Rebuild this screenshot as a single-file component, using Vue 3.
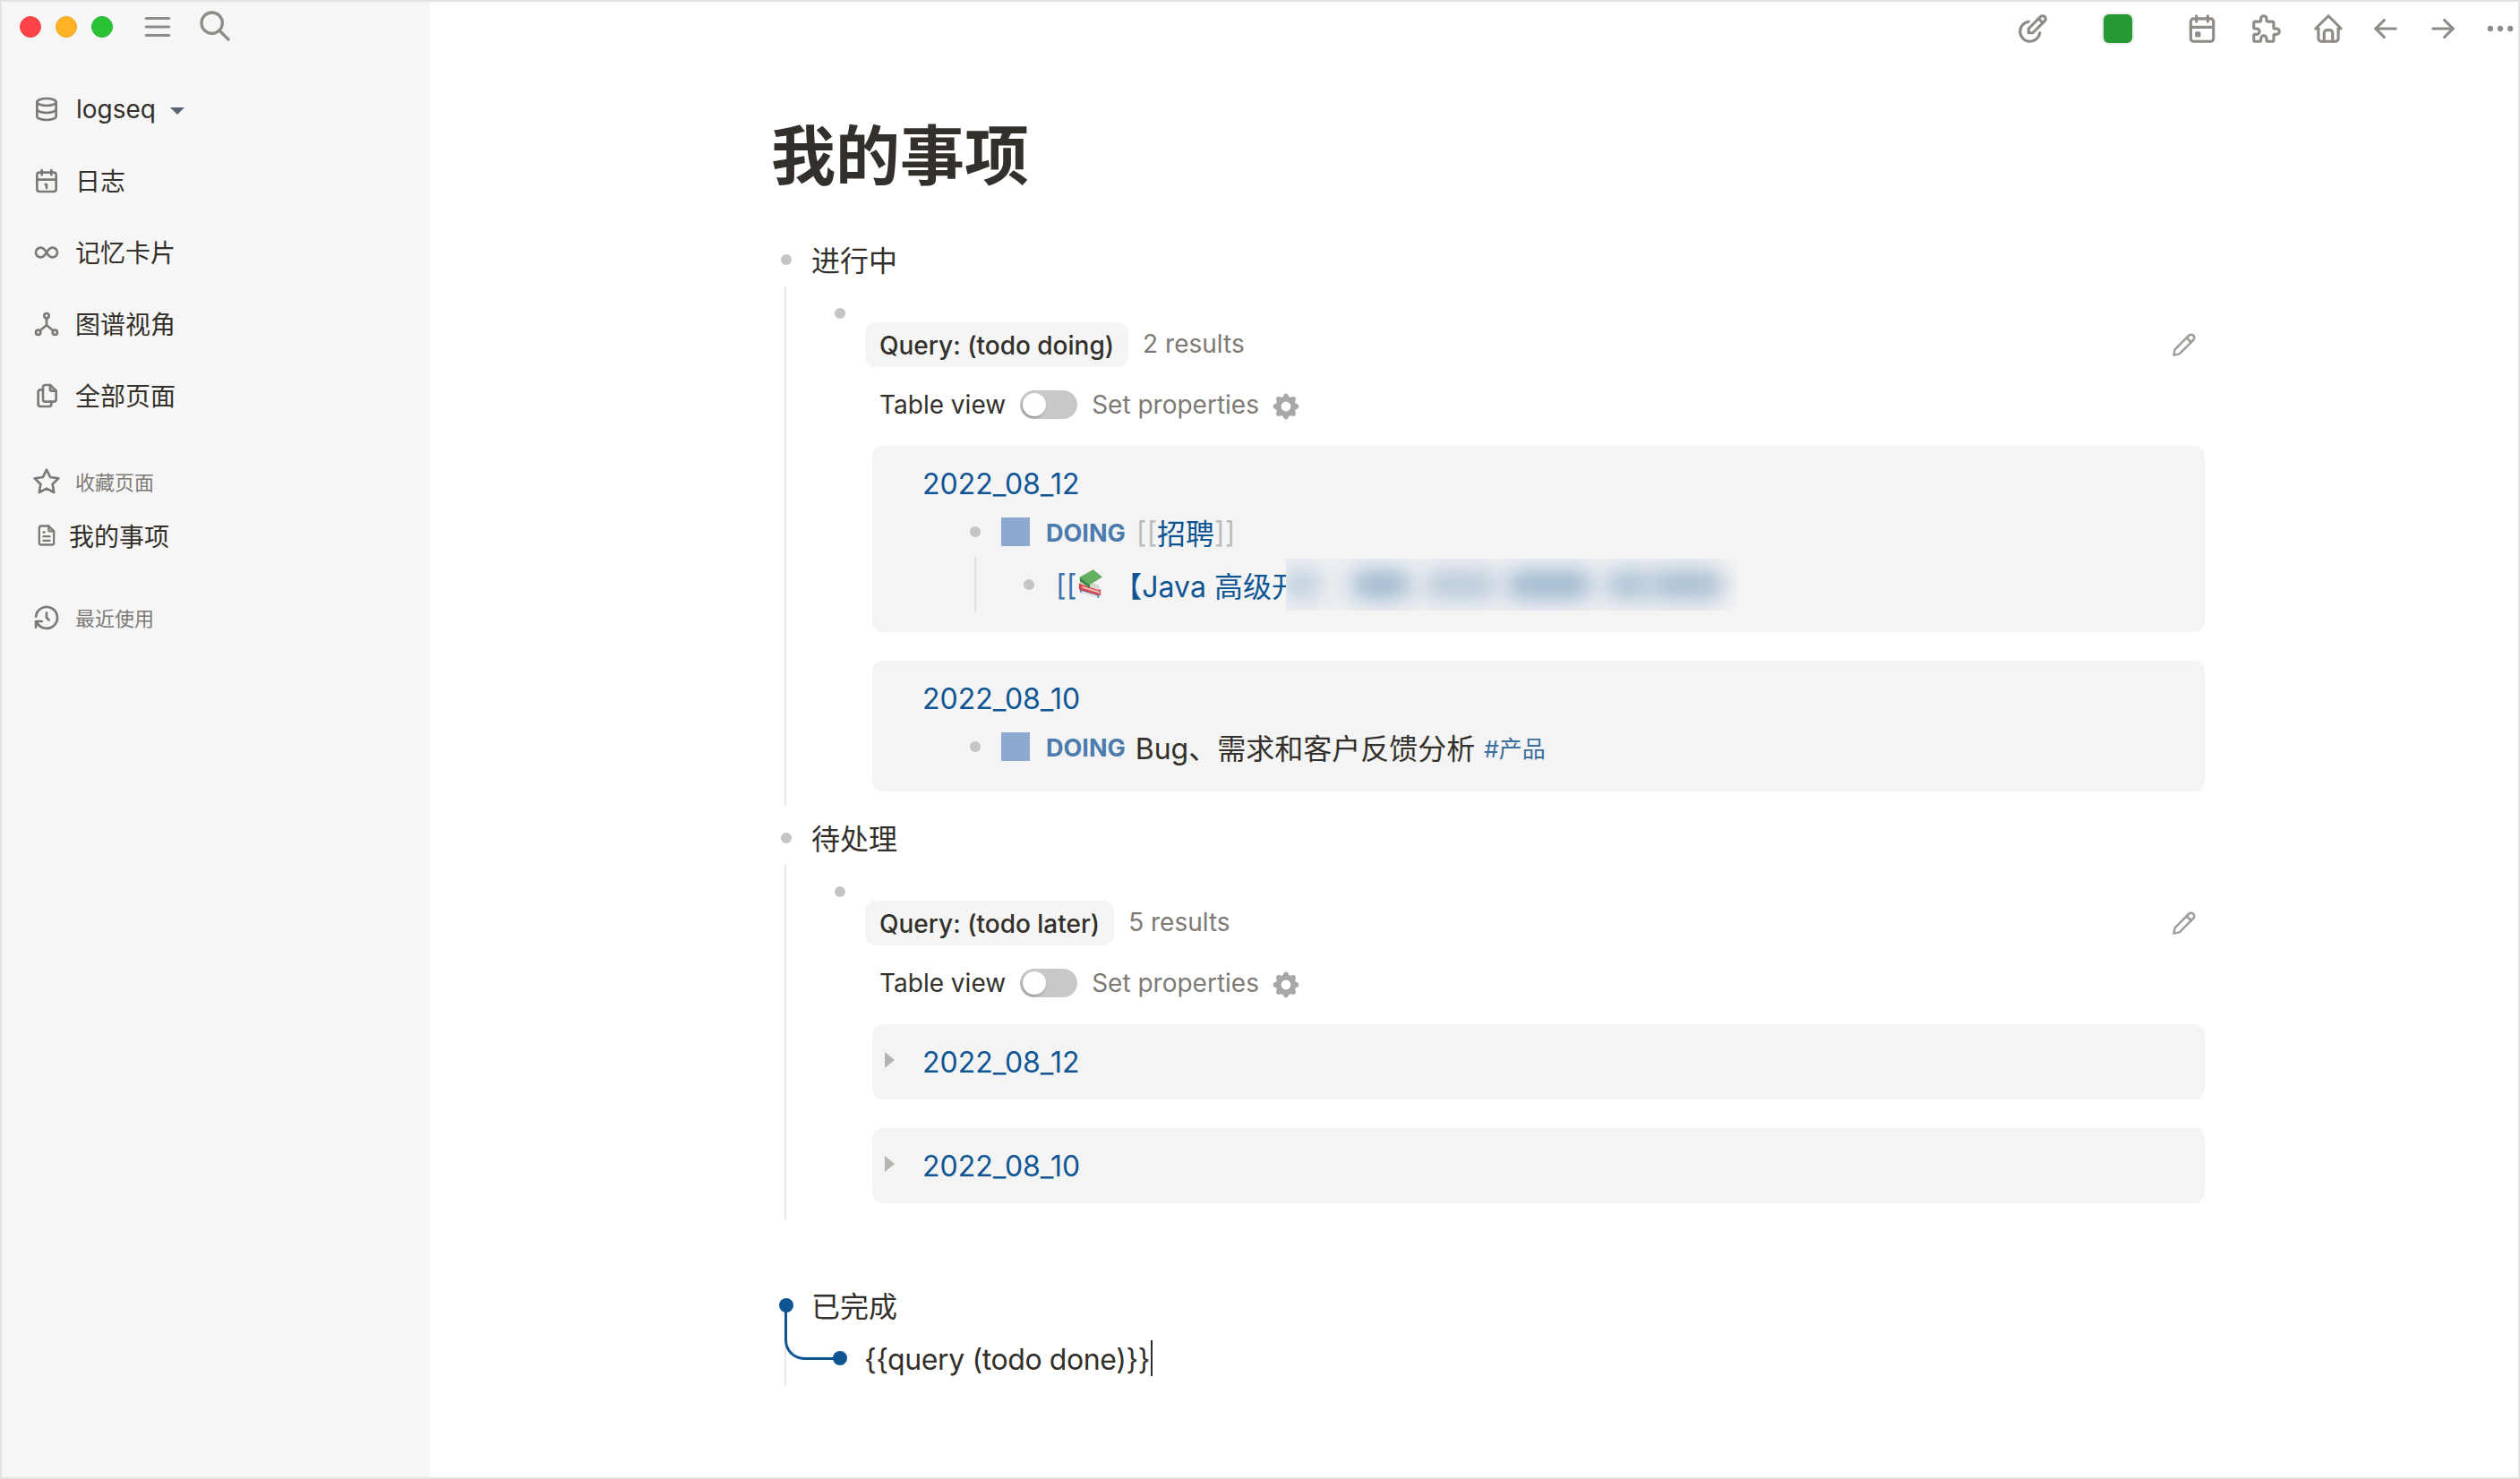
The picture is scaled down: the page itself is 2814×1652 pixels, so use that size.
<script setup>
const doneQuery = '{{query (todo done)}}'
const icons = {
  db: ['M4 6a8 3 0 1 0 16 0a8 3 0 1 0 -16 0', 'M4 6v6a8 3 0 0 0 16 0v-6', 'M4 12v6a8 3 0 0 0 16 0v-6'],
  cal1: ['M4 7a2 2 0 0 1 2 -2h12a2 2 0 0 1 2 2v12a2 2 0 0 1 -2 2h-12a2 2 0 0 1 -2 -2z', 'M16 3v4', 'M8 3v4', 'M4 11h16', 'M11 15h1v3'],
  inf: ['M9.828 9.172a4 4 0 1 0 0 5.656a10 10 0 0 0 2.172 -2.828a10 10 0 0 1 2.172 -2.828a4 4 0 1 1 0 5.656a10 10 0 0 1 -2.172 -2.828a10 10 0 0 0 -2.172 -2.828'],
  graph: ['M10 5a2 2 0 1 0 4 0a2 2 0 1 0 -4 0', 'M3 19a2 2 0 1 0 4 0a2 2 0 1 0 -4 0', 'M17 19a2 2 0 1 0 4 0a2 2 0 1 0 -4 0', 'M6.5 17.5l5.5 -4.5l5.5 4.5', 'M12 7v6'],
  files: ['M15 3v4a1 1 0 0 0 1 1h4', 'M18 17h-7a2 2 0 0 1 -2 -2v-10a2 2 0 0 1 2 -2h4l5 5v7a2 2 0 0 1 -2 2z', 'M16 17v2a2 2 0 0 1 -2 2h-7a2 2 0 0 1 -2 -2v-10a2 2 0 0 1 2 -2h2'],
  star: ['M12 17.75l-6.172 3.245l1.179 -6.873l-5 -4.867l6.9 -1l3.086 -6.253l3.086 6.253l6.9 1l-5 4.867l1.179 6.873z'],
  doc: ['M14 3v4a1 1 0 0 0 1 1h4', 'M17 21h-10a2 2 0 0 1 -2 -2v-14a2 2 0 0 1 2 -2h7l5 5v11a2 2 0 0 1 -2 2z', 'M9 9h1', 'M9 13h6', 'M9 17h6'],
  hist: ['M12 8v4l2 2', 'M3.05 11a9 9 0 1 1 .5 4m-.5 5v-5h5'],
  menu: ['M4 6h16', 'M4 12h16', 'M4 18h16'],
  search: ['M3 10a7 7 0 1 0 14 0a7 7 0 1 0 -14 0', 'M21 21l-6 -6'],
  edit: ['M12 15l8.385 -8.415a2.1 2.1 0 0 0 -2.97 -2.97l-8.415 8.385v3h3z', 'M16 5l3 3', 'M9 7.07a7 7 0 0 0 1 13.93a7 7 0 0 0 6.929 -6'],
  cal: ['M4 7a2 2 0 0 1 2 -2h12a2 2 0 0 1 2 2v12a2 2 0 0 1 -2 2h-12a2 2 0 0 1 -2 -2z', 'M16 3v4', 'M8 3v4', 'M4 11h16', 'M8 15h2v2h-2z'],
  puzzle: ['M4 7h3a1 1 0 0 0 1 -1v-1a2 2 0 0 1 4 0v1a1 1 0 0 0 1 1h3a1 1 0 0 1 1 1v3a1 1 0 0 0 1 1h1a2 2 0 0 1 0 4h-1a1 1 0 0 0 -1 1v3a1 1 0 0 1 -1 1h-3a1 1 0 0 1 -1 -1v-1a2 2 0 0 0 -4 0v1a1 1 0 0 1 -1 1h-3a1 1 0 0 1 -1 -1v-3a1 1 0 0 1 1 -1h1a2 2 0 0 0 0 -4h-1a1 1 0 0 1 -1 -1v-3a1 1 0 0 1 1 -1'],
  home: ['M5 12h-2l9 -9l9 9h-2', 'M5 12v7a2 2 0 0 0 2 2h10a2 2 0 0 0 2 -2v-7', 'M9 21v-6a2 2 0 0 1 2 -2h2a2 2 0 0 1 2 2v6'],
  left: ['M5 12h14', 'M5 12l6 6', 'M5 12l6 -6'],
  right: ['M5 12h14', 'M13 18l6 -6', 'M13 6l6 6'],
  dots: ['M4 12a1 1 0 1 0 2 0a1 1 0 1 0 -2 0', 'M11 12a1 1 0 1 0 2 0a1 1 0 1 0 -2 0', 'M18 12a1 1 0 1 0 2 0a1 1 0 1 0 -2 0'],
  pencil: ['M3.5 20.5l1 -5l12.5 -12.5a2.8 2.8 0 0 1 4 4l-12.5 12.5z', 'M15 5l4 4']
}
const gear = 'M11.49 3.17c-.38-1.56-2.6-1.56-2.98 0a1.532 1.532 0 01-2.286.948c-1.372-.836-2.942.734-2.106 2.106.54.886.061 2.042-.947 2.287-1.561.379-1.561 2.6 0 2.978a1.532 1.532 0 01.947 2.287c-.836 1.372.734 2.942 2.106 2.106a1.532 1.532 0 012.287.947c.379 1.561 2.6 1.561 2.978 0a1.533 1.533 0 012.287-.947c1.372.836 2.942-.734 2.106-2.106a1.533 1.533 0 01.947-2.287c1.561-.379 1.561-2.6 0-2.978a1.532 1.532 0 01-.947-2.287c.836-1.372-.734-2.942-2.106-2.106a1.532 1.532 0 01-2.287-.947zM10 13a3 3 0 100-6 3 3 0 000 6z'
const nav = [
  { icon: 'cal1', label: '日志' },
  { icon: 'inf', label: '记忆卡片' },
  { icon: 'graph', label: '图谱视角' },
  { icon: 'files', label: '全部页面' }
]
const tools = [
  { icon: 'edit', cls: 'first' },
  { icon: 'cal', cls: 'cal-tool' },
  { icon: 'puzzle', cls: 'puzzle-tool' },
  { icon: 'home', cls: 'home-tool' },
  { icon: 'left', cls: '' },
  { icon: 'right', cls: '' },
  { icon: 'dots', cls: '' }
]
const blobs = [
  { l: -4, w: 44, c: '#bccddc' },
  { l: 72, w: 68, c: '#9db7ce' },
  { l: 154, w: 82, c: '#b8c9d9' },
  { l: 246, w: 96, c: '#9db7ce' },
  { l: 356, w: 54, c: '#acc1d4' },
  { l: 406, w: 84, c: '#a6bcd1' }
]
</script>

<template>
  <div class="app">
    <aside class="sidebar">
      <div class="side-top">
        <span class="light red"></span>
        <span class="light yellow"></span>
        <span class="light green"></span>
        <svg class="ic menu" viewBox="0 0 24 24"><path v-for="d in icons.menu" :key="d" :d="d" /></svg>
        <svg class="ic search" viewBox="0 0 24 24"><path v-for="d in icons.search" :key="d" :d="d" /></svg>
      </div>
      <nav class="nav">
        <div class="nav-item">
          <svg class="ic side-ic" viewBox="0 0 24 24"><path v-for="d in icons.db" :key="d" :d="d" /></svg>
          <span class="repo">logseq</span>
          <span class="caret"></span>
        </div>
        <div v-for="n in nav" :key="n.label" class="nav-item">
          <svg class="ic side-ic" viewBox="0 0 24 24"><path v-for="d in icons[n.icon]" :key="d" :d="d" /></svg>
          <span class="cjk">{{ n.label }}</span>
        </div>
      </nav>
      <div class="sec fav">
        <svg class="ic side-ic" viewBox="0 0 24 24"><path v-for="d in icons.star" :key="d" :d="d" /></svg>
        <span class="cjk">收藏页面</span>
      </div>
      <div class="fav-page">
        <svg class="ic doc-ic" viewBox="0 0 24 24"><path v-for="d in icons.doc" :key="d" :d="d" /></svg>
        <span>我的事项</span>
      </div>
      <div class="sec recent">
        <svg class="ic side-ic" viewBox="0 0 24 24"><path v-for="d in icons.hist" :key="d" :d="d" /></svg>
        <span class="cjk">最近使用</span>
      </div>
    </aside>

    <main class="main">
      <header class="toolbar">
        <div v-for="(t, i) in tools" :key="t.icon" class="tool" :class="t.cls">
          <svg class="ic tool-ic" viewBox="0 0 24 24"><path v-for="d in icons[t.icon]" :key="d" :d="d" /></svg>
          <span v-if="i === 0" class="swatch"></span>
        </div>
      </header>

      <div class="page">
        <h1 class="title">我的事项</h1>

        <div class="row-head"><span class="dot"></span><span class="head-text">进行中</span></div>
        <section class="nested first-nested">
          <div class="sub-dot"><span class="dot"></span></div>
          <div class="query-head">
            <span class="pill">Query: (todo doing)</span>
            <span class="count">2 results</span>
            <svg class="ic pencil" viewBox="0 0 24 24"><path v-for="d in icons.pencil" :key="d" :d="d" /></svg>
          </div>
          <div class="query-opts">
            <span>Table view</span>
            <span class="toggle"><span class="thumb"></span></span>
            <span class="muted">Set properties</span>
            <svg class="gear" viewBox="0 0 20 20"><path fill-rule="evenodd" :d="gear" /></svg>
          </div>

          <div class="card">
            <div class="date">2022_08_12</div>
            <div class="todo">
              <span class="dot"></span><span class="box"></span><b class="doing">DOING</b>
              <span class="brk first-brk">[[</span><span class="link">招聘</span><span class="brk">]]</span>
            </div>
            <div class="child">
              <span class="dot"></span>
              <span class="link-line">
                <span class="plain-brk">[[</span>
                <svg class="books" viewBox="0 0 30 36">
                  <path d="M3 27l23 7v-6L3 21z" fill="#5f7cb4" />
                  <path d="M5 28l19 5.500v-2.500L5 25.500z" fill="#ece8e2" />
                  <path d="M2 16l26 8v7L2 24z" fill="#d9474b" />
                  <path d="M6 20l21 6.500v2L6 22z" fill="#f0c9c4" />
                  <path d="M3 10l23 9v6L3 17z" fill="#d8d3cc" />
                  <path d="M3 9L19 0l11 9l-15 9z" fill="#62b060" />
                  <path d="M3 9l12 9v4L3 14z" fill="#3b8a3f" />
                </svg>
                <span class="java">【Java 高级开</span>
              </span>
              <div class="blur-mask">
                <span v-for="b in blobs" :key="b.l" class="blob" :style="{ left: b.l + 'px', width: b.w + 'px', background: b.c }"></span>
              </div>
            </div>
          </div>

          <div class="card second">
            <div class="date">2022_08_10</div>
            <div class="todo">
              <span class="dot"></span><span class="box"></span><b class="doing">DOING</b>
              <span class="todo-text">Bug、需求和客户反馈分析</span>
              <span class="tag">#产品</span>
            </div>
          </div>
        </section>

        <div class="row-head"><span class="dot"></span><span class="head-text">待处理</span></div>
        <section class="nested later-nested">
          <div class="sub-dot"><span class="dot"></span></div>
          <div class="query-head">
            <span class="pill">Query: (todo later)</span>
            <span class="count">5 results</span>
            <svg class="ic pencil" viewBox="0 0 24 24"><path v-for="d in icons.pencil" :key="d" :d="d" /></svg>
          </div>
          <div class="query-opts">
            <span>Table view</span>
            <span class="toggle"><span class="thumb"></span></span>
            <span class="muted">Set properties</span>
            <svg class="gear" viewBox="0 0 20 20"><path fill-rule="evenodd" :d="gear" /></svg>
          </div>
          <div class="card collapsed">
            <span class="tri"></span><span class="date">2022_08_12</span>
          </div>
          <div class="card collapsed second">
            <span class="tri"></span><span class="date">2022_08_10</span>
          </div>
        </section>

        <div class="row-head done-head"><span class="dot active"></span><span class="head-text">已完成</span></div>
        <section class="nested done-nested">
          <span class="connector"></span>
          <span class="dot active"></span>
          <span class="editing">{{ doneQuery }}</span><span class="cursor"></span>
        </section>
      </div>
    </main>
  </div>
</template>

<style scoped>
.app {
  width: 2814px;
  height: 1652px;
  box-sizing: border-box;
  border: 2px solid #e3e3e3;
  display: flex;
  overflow: hidden;
  background: #fff;
  color: #33302b;
  font-family: Inter, "Noto Sans CJK SC", sans-serif;
}
.ic {
  fill: none;
  stroke: currentColor;
  stroke-width: 2;
  stroke-linecap: round;
  stroke-linejoin: round;
  flex: none;
}

/* sidebar */
.sidebar {
  width: 478px;
  flex: none;
  background: #f6f6f6;
  color: #7d7a76;
}
.side-top {
  height: 56px;
  display: flex;
  align-items: center;
  padding-left: 20px;
}
.light {
  width: 24px;
  height: 24px;
  border-radius: 50%;
  margin-right: 16px;
  box-sizing: border-box;
}
.red { background: #ff4245; border: 1px solid #e8494b; }
.yellow { background: #ffb224; border: 1px solid #e9a62a; }
.green { background: #28c434; border: 1px solid #2bb03a; margin-right: 0; }
.menu { width: 38px; height: 38px; color: #8f8c88; margin-left: 31px; }
.search { width: 40px; height: 40px; color: #8f8c88; margin-left: 25px; margin-top: -2px; }
.nav { margin-top: 24px; }
.nav-item {
  height: 80px;
  display: flex;
  align-items: center;
  padding-left: 34px;
  font-size: 28px;
  color: #33302b;
}
.cjk { margin-left: -1px; margin-top: -2px; }
.side-ic { width: 32px; height: 32px; color: #7d7a76; margin-right: 17px; }
.caret {
  width: 0;
  height: 0;
  border-left: 8px solid transparent;
  border-right: 8px solid transparent;
  border-top: 8px solid #5d6377;
  margin-left: 16px;
  margin-top: 4px;
}
.sec {
  height: 40px;
  display: flex;
  align-items: center;
  padding-left: 34px;
  font-size: 22px;
  color: #7d7a76;
}
.fav { margin-top: 36px; }
.recent { margin-top: 52px; }
.fav-page {
  height: 40px;
  margin-top: 20px;
  display: flex;
  align-items: center;
  padding-left: 36px;
  font-size: 28px;
  color: #33302b;
}
.doc-ic { width: 28px; height: 28px; color: #7d7a76; margin-right: 11px; }

/* toolbar */
.main { flex: 1; min-width: 0; }
.toolbar {
  height: 60px;
  display: flex;
  justify-content: flex-end;
  align-items: center;
  gap: 24px;
  color: #8f8c88;
}
.tool { width: 40px; height: 40px; display: flex; align-items: center; justify-content: center; }
.tool.first { width: 134px; justify-content: flex-start; }
.tool.cal-tool { margin-left: 30px; }
.tool.puzzle-tool { margin-left: 8px; }
.tool.home-tool { margin-left: 5px; }
.tool-ic { width: 38px; height: 38px; }
.swatch {
  width: 32px;
  height: 32px;
  margin-left: 60px;
  background: #259933;
  border-radius: 6px;
  box-shadow: 0 0 0 2px #ececec;
  flex: none;
}

/* page */
.page { width: 1601px; margin-left: 381px; }
.title {
  margin: 62px 0 38px;
  height: 100px;
  line-height: 100px;
  font-size: 72px;
  font-weight: 700;
}
.row-head {
  height: 56px;
  display: flex;
  align-items: center;
  padding-left: 11px;
  font-size: 32px;
}
.row-head .dot { margin-right: 22px; }
.head-text { margin-top: -2px; }
.dot {
  width: 12px;
  height: 12px;
  border-radius: 50%;
  background: #c5c5c5;
  flex: none;
}
.dot.active {
  width: 16px;
  height: 16px;
  background: #0f5594;
  position: relative;
  z-index: 1;
}
.done-head { margin-top: 68px; padding-left: 9px; }
.done-head .dot.active { margin-right: 20px; }
.nested {
  margin-left: 15px;
  border-left: 2px solid #e8e8e8;
  padding-left: 88px;
}
.first-nested { height: 580px; margin-top: 2px; margin-bottom: 8px; }
.later-nested { height: 396px; margin-top: 2px; }
.sub-dot { height: 40px; margin-left: -34px; display: flex; padding-top: 24px; box-sizing: border-box; }
.query-head {
  height: 50px;
  display: flex;
  align-items: center;
  font-size: 28px;
}
.pill {
  height: 50px;
  line-height: 52px;
  padding: 0 16px;
  background: #f5f5f5;
  border-radius: 12px;
  font-weight: 500;
}
.count { margin-left: 16px; color: #7d7a76; margin-top: -2px; }
.pencil { width: 30px; height: 30px; color: #a09e9b; margin-left: auto; margin-right: 9px; margin-top: 2px; }
.query-opts {
  height: 32px;
  margin-top: 26px;
  padding-left: 16px;
  display: flex;
  align-items: center;
  font-size: 28px;
}
.toggle {
  width: 64px;
  height: 32px;
  margin-left: 16px;
  border-radius: 16px;
  background: #c8c8c8;
  display: flex;
  align-items: center;
  padding-left: 3px;
  box-sizing: border-box;
}
.thumb {
  width: 26px;
  height: 26px;
  border-radius: 50%;
  background: #fff;
  box-shadow: -1px 2px 3px rgba(0, 0, 0, 0.25);
}
.muted { margin-left: 16px; color: #7d7a76; }
.gear { width: 36px; height: 36px; fill: #a9a8a6; margin-left: 12px; margin-top: 4px; flex: none; }

.card {
  margin: 30px 0 0 8px;
  padding: 20px 0 22px 56px;
  background: #f4f4f4;
  border-radius: 12px;
  height: 208px;
  box-sizing: border-box;
}
.card.second { margin-top: 32px; height: 146px; }
.date {
  height: 44px;
  line-height: 46px;
  font-size: 32px;
  color: #0f5594;
}
.todo {
  height: 48px;
  margin-top: 8px;
  padding-left: 53px;
  display: flex;
  align-items: center;
  font-size: 32px;
}
.box { width: 32px; height: 32px; background: #8ea9cf; margin-left: 23px; flex: none; }
.doing { margin-left: 18px; margin-top: 2px; font-size: 27px; font-weight: 700; color: #4b7cad; }
.brk { color: #bdbdbd; }
.first-brk { margin-left: 12px; }
.link { color: #0f5594; }
.child {
  position: relative;
  height: 62px;
  margin: 4px 0 0 58px;
  padding-left: 53px;
  border-left: 2px solid #e2e2e2;
  display: flex;
  align-items: center;
}
.link-line {
  margin-left: 24px;
  display: flex;
  align-items: center;
  font-size: 32px;
  color: #0f5594;
}
.plain-brk { color: #3a76ac; }
.books { width: 28px; height: 34px; margin-left: 1px; margin-top: 0; flex: none; }
.java { margin-left: 12px; }
.blur-mask {
  position: absolute;
  left: 346px;
  top: 2px;
  width: 504px;
  height: 58px;
  overflow: hidden;
  background: linear-gradient(90deg, #eef0f3 0%, #eef0f3 92%, #f4f4f4 100%);
}
.blob {
  position: absolute;
  top: 13px;
  height: 32px;
  border-radius: 16px;
  filter: blur(12px);
}
.todo-text { margin-left: 11px; }
.tag { margin-left: 10px; font-size: 26px; color: #3a6f9f; }

.card.collapsed {
  height: 84px;
  padding: 0 0 0 14px;
  display: flex;
  align-items: center;
}
.tri {
  width: 0;
  height: 0;
  border-top: 9px solid transparent;
  border-bottom: 9px solid transparent;
  border-left: 11px solid #b5b4b1;
  margin-right: 31px;
  margin-top: -4px;
}

.done-nested {
  position: relative;
  height: 62px;
  padding-left: 52px;
  display: flex;
  align-items: center;
  font-size: 32px;
}
.connector {
  position: absolute;
  left: -2px;
  top: -28px;
  width: 58px;
  height: 61px;
  border-left: 3px solid #0f5594;
  border-bottom: 3px solid #0f5594;
  border-bottom-left-radius: 22px;
  box-sizing: border-box;
}
.editing { margin-left: 19px; margin-top: 2px; white-space: pre; letter-spacing: -0.4px; }
.cursor { width: 2px; height: 40px; background: #33302b; margin-left: 1px; }
</style>

<style>
html, body { margin: 0; padding: 0; background: #fff; }
</style>
